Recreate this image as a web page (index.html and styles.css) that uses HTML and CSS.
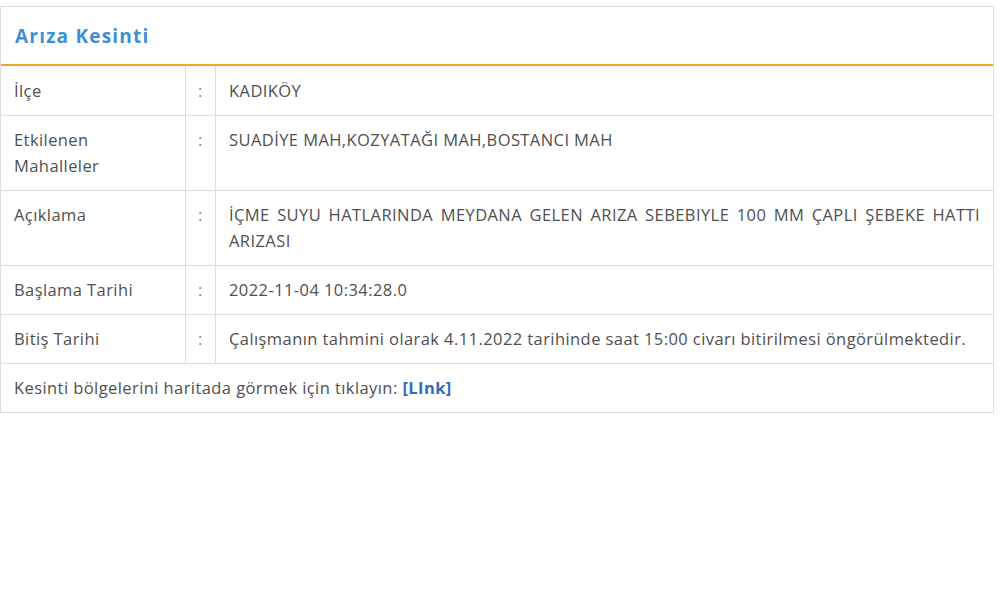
FILE: index.html
```html
<!DOCTYPE html>
<html lang="tr">
<head>
<meta charset="utf-8">
<title>Arıza Kesinti</title>
<link rel="stylesheet" href="styles.css">
</head>
<body>
<div class="panel">
  <div class="panel-head"><h2 class="panel-title">Arıza Kesinti</h2></div>
  <table class="info">
    <tr><td class="lbl">İlçe</td><td class="sep">:</td><td class="val">KADIKÖY</td></tr>
    <tr><td class="lbl">Etkilenen Mahalleler</td><td class="sep">:</td><td class="val">SUADİYE MAH,KOZYATAĞI MAH,BOSTANCI MAH</td></tr>
    <tr><td class="lbl">Açıklama</td><td class="sep">:</td><td class="val">İÇME SUYU HATLARINDA MEYDANA GELEN ARIZA SEBEBIYLE 100 MM ÇAPLI ŞEBEKE HATTI ARIZASI</td></tr>
    <tr><td class="lbl">Başlama Tarihi</td><td class="sep">:</td><td class="val">2022-11-04 10:34:28.0</td></tr>
    <tr><td class="lbl">Bitiş Tarihi</td><td class="sep">:</td><td class="val">Çalışmanın tahmini olarak 4.11.2022 tarihinde saat 15:00 civarı bitirilmesi öngörülmektedir.</td></tr>
    <tr><td class="full" colspan="3">Kesinti bölgelerini haritada görmek için tıklayın: <a class="map-link" href="#">[LInk]</a></td></tr>
  </table>
</div>
</body>
</html>
```
FILE: styles.css
```css
html, body {
  margin: 0;
  padding: 0;
  background: #ffffff;
}
body {
  padding-top: 6px;
  font-family: "Open Sans", "Liberation Sans", sans-serif;
  font-size: 16.5px;
  letter-spacing: 0.42px;
  color: #505050;
}
.panel {
  width: 994px;
  border: 1px solid #dddddd;
  box-sizing: border-box;
}
.panel-head {
  height: 57px;
  border-bottom: 2px solid #f0a62a;
  display: flex;
  align-items: center;
  padding-left: 14px;
}
.panel-title {
  margin: 0;
  font-size: 19px;
  font-weight: 700;
  letter-spacing: 1.2px;
  color: #3d8fd9;
}
.info {
  width: 100%;
  border-collapse: collapse;
}
.info td {
  border-top: 1px solid #dddddd;
  padding: 11px 13px 11px 13px;
  line-height: 26px;
  vertical-align: top;
}
.info tr:first-child td {
  border-top: none;
  padding-top: 12px;
}
.lbl {
  width: 158px;
  border-right: 1px solid #dddddd;
}
.info .sep {
  width: 29px;
  padding-left: 0;
  padding-right: 0;
  text-align: center;
  border-right: 1px solid #dddddd;
  color: #888888;
}
.val {
  text-align: justify;
}
.map-link {
  color: #2f6eb5;
  font-weight: 700;
  text-decoration: none;
}
```
